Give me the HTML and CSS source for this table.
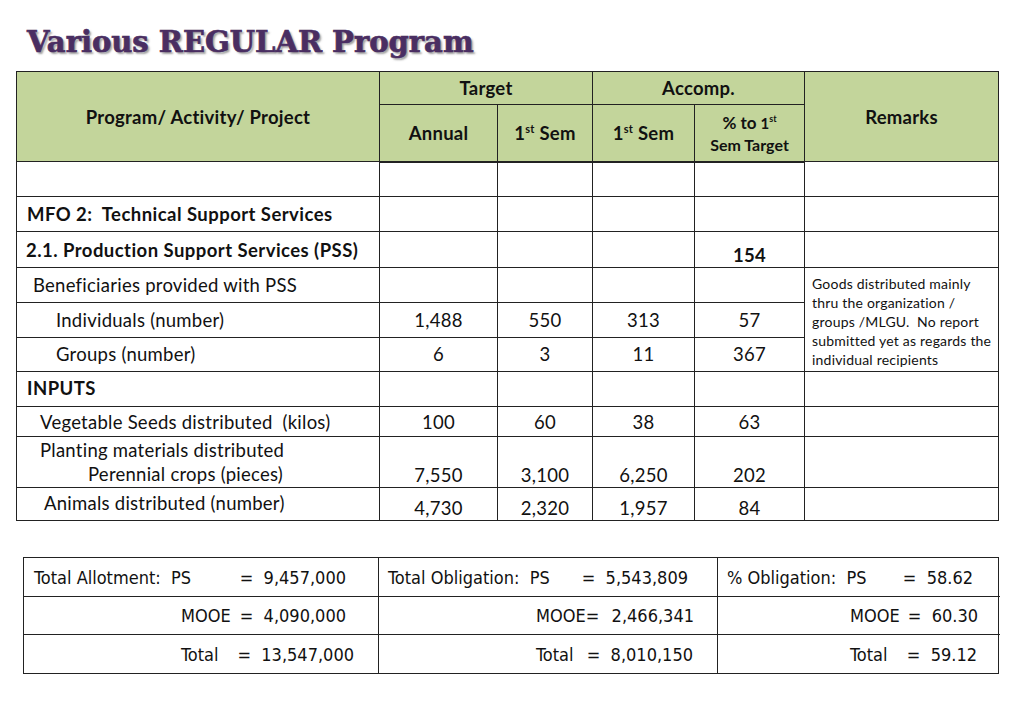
FILE: index.html
```html
<!DOCTYPE html>
<html lang="en">
<head>
<meta charset="utf-8">
<title>Various REGULAR Program</title>
<link rel="stylesheet" href="styles.css">
</head>
<body>
<div class="slide">
  <h1 class="title">Various REGULAR Program</h1>

  <table class="main">
    <colgroup>
      <col class="c-pap"><col class="c-annual"><col class="c-sem"><col class="c-acc"><col class="c-pct"><col class="c-rem">
    </colgroup>
    <thead>
      <tr class="h1">
        <th rowspan="2">Program/ Activity/ Project</th>
        <th colspan="2">Target</th>
        <th colspan="2">Accomp.</th>
        <th rowspan="2">Remarks</th>
      </tr>
      <tr class="h2">
        <th>Annual</th>
        <th>1<sup>st</sup> Sem</th>
        <th>1<sup>st</sup> Sem</th>
        <th class="pct">% to <span class="small1">1<sup>st</sup></span><br><span class="small2">Sem Target</span></th>
      </tr>
    </thead>
    <tbody>
      <tr class="r35"><td></td><td></td><td></td><td></td><td></td><td></td></tr>
      <tr class="r35"><td class="lbl b in11">MFO 2:&nbsp; Technical Support Services</td><td></td><td></td><td></td><td></td><td></td></tr>
      <tr class="r36"><td class="lbl b in10">2.1. Production Support Services (PSS)</td><td></td><td></td><td></td><td class="num b bot">154</td><td></td></tr>
      <tr class="r35"><td class="lbl in17">Beneficiaries provided with PSS</td><td></td><td></td><td></td><td></td>
        <td rowspan="3" class="remark">Goods distributed mainly<br>thru the organization /<br>groups /MLGU.&nbsp; No report<br>submitted yet as regards the<br>individual recipients</td></tr>
      <tr class="r35"><td class="lbl in40">Individuals (number)</td><td class="num">1,488</td><td class="num">550</td><td class="num">313</td><td class="num">57</td></tr>
      <tr class="r34"><td class="lbl in40 up">Groups (number)</td><td class="num up">6</td><td class="num up">3</td><td class="num up">11</td><td class="num up">367</td></tr>
      <tr class="r35"><td class="lbl b in11 up">INPUTS</td><td></td><td></td><td></td><td></td><td></td></tr>
      <tr class="r30"><td class="lbl in24">Vegetable Seeds distributed&nbsp; (kilos)</td><td class="num">100</td><td class="num">60</td><td class="num">38</td><td class="num">63</td><td></td></tr>
      <tr class="r51"><td class="lbl in24 two">Planting materials distributed<br><span class="sub">Perennial crops (pieces)</span></td><td class="num bot">7,550</td><td class="num bot">3,100</td><td class="num bot">6,250</td><td class="num bot">202</td><td></td></tr>
      <tr class="r33"><td class="lbl in28 up">Animals distributed (number)</td><td class="num bot">4,730</td><td class="num bot">2,320</td><td class="num bot">1,957</td><td class="num bot">84</td><td></td></tr>
    </tbody>
  </table>

  <div class="totals">
    <div class="cell a1"><span>Total Allotment:&nbsp; PS</span><span>=&nbsp; 9,457,000</span></div>
    <div class="cell b1"><span>Total Obligation:&nbsp; PS</span><span>=&nbsp; 5,543,809</span></div>
    <div class="cell c1"><span>% Obligation:&nbsp; PS</span><span>=&nbsp; 58.62</span></div>
    <div class="cell a2"><span>MOOE</span><span>=&nbsp; 4,090,000</span></div>
    <div class="cell b2"><span>MOOE=</span><span>2,466,341</span></div>
    <div class="cell c2"><span>MOOE</span><span>=&nbsp; 60.30</span></div>
    <div class="cell a3"><span>Total</span><span>=&nbsp; 13,547,000</span></div>
    <div class="cell b3"><span>Total</span><span>=&nbsp; 8,010,150</span></div>
    <div class="cell c3"><span>Total</span><span>=&nbsp; 59.12</span></div>
  </div>
</div>
</body>
</html>
```

FILE: styles.css
```css
* { box-sizing: border-box; }

html, body {
  margin: 0;
  padding: 0;
  background: #ffffff;
}

.slide {
  width: 1023px;
  height: 708px;
  padding: 0 0 0 16px;
  font-family: Lato, "Open Sans", sans-serif;
  color: #111;
}

.title {
  margin: 0;
  padding: 24px 0 0 11px;
  height: 71px;
  font-family: "DejaVu Serif", serif;
  font-weight: 900;
  font-size: 29px;
  line-height: 36px;
  letter-spacing: 0;
  color: #4a2e62;
  -webkit-text-stroke: 0.7px #4a2e62;
  text-shadow: 2px 2px 2px rgba(80, 80, 80, 0.55);
}

.main {
  border-collapse: collapse;
  table-layout: fixed;
  width: 982px;
  font-size: 18.5px;
  letter-spacing: 0.25px;
}

.c-pap { width: 363px; }
.c-annual { width: 118px; }
.c-sem { width: 95px; }
.c-acc { width: 102px; }
.c-pct { width: 110px; }
.c-rem { width: 194px; }

.main th, .main td {
  border: 1px solid #222;
  padding: 0;
}

.main th {
  background: #c3d59b;
  font-weight: 700;
  text-align: center;
  color: #111;
}

.h1 { height: 33px; }
.h1 th { vertical-align: middle; }
.h2 { height: 57px; }
.main thead tr.h2 th { border-bottom: 2px solid #222; }
.main th.pct { font-size: 17px; line-height: 22px; padding-top: 2px; letter-spacing: 0; }
.main th.pct .small1 { font-size: 15px; }
.main th.pct .small2 { font-size: 16px; }
.main th.pct sup { font-size: 9px; }

sup {
  font-size: 11px;
  vertical-align: 7px;
  line-height: 0;
}

.r30 { height: 30px; }
.r33 { height: 33px; }
.r34 { height: 34px; }
.r35 { height: 35px; }
.r36 { height: 36px; }
.r51 { height: 51px; }

.lbl {
  text-align: left;
  white-space: nowrap;
  vertical-align: middle;
}
.lbl.b { font-weight: 700; letter-spacing: 0.45px; }
.in10 { padding-left: 9px !important; }
.in11 { padding-left: 10px !important; }
.in17 { padding-left: 16px !important; }
.in24 { padding-left: 23px !important; }
.in28 { padding-left: 27px !important; }
.in40 { padding-left: 39px !important; }
.up { padding-bottom: 2px !important; }

.two { line-height: 24px; padding-bottom: 1px !important; }
.two .sub { padding-left: 48px; }

.num {
  text-align: center;
  vertical-align: middle;
}
.num.b { font-weight: 700; }
.num.bot { vertical-align: bottom; padding-bottom: 1px !important; }

.remark {
  font-size: 14px;
  line-height: 19px;
  letter-spacing: 0.2px;
  white-space: nowrap;
  padding: 3px 0 0 7px !important;
  vertical-align: middle;
}

.totals {
  margin: 36px 0 0 7px;
  width: 976px;
  display: grid;
  grid-template-columns: 355px 339px 282px;
  grid-template-rows: 39px 38px 38px;
  border: 1px solid #222;
  font-family: "DejaVu Sans Condensed", sans-serif;
  font-size: 18px;
  color: #111;
}

.totals .cell {
  display: flex;
  align-items: center;
  justify-content: space-between;
  border-right: 1px solid #222;
  border-bottom: 1px solid #222;
  white-space: pre;
}
.totals .cell:nth-child(3n) { border-right: none; }
.totals .cell:nth-child(n+7) { border-bottom: none; }

.a1 { padding: 0 32px 0 10px; }
.a2 { padding: 0 32px 0 157px; }
.a3 { padding: 0 24px 0 157px; }
.b1 { padding: 0 29px 0 9px; }
.b2 { padding: 0 23px 0 157px; }
.b3 { padding: 0 24px 0 157px; }
.c1 { padding: 0 27px 0 9px; }
.c2 { padding: 0 22px 0 132px; }
.c3 { padding: 0 23px 0 132px; }
```
